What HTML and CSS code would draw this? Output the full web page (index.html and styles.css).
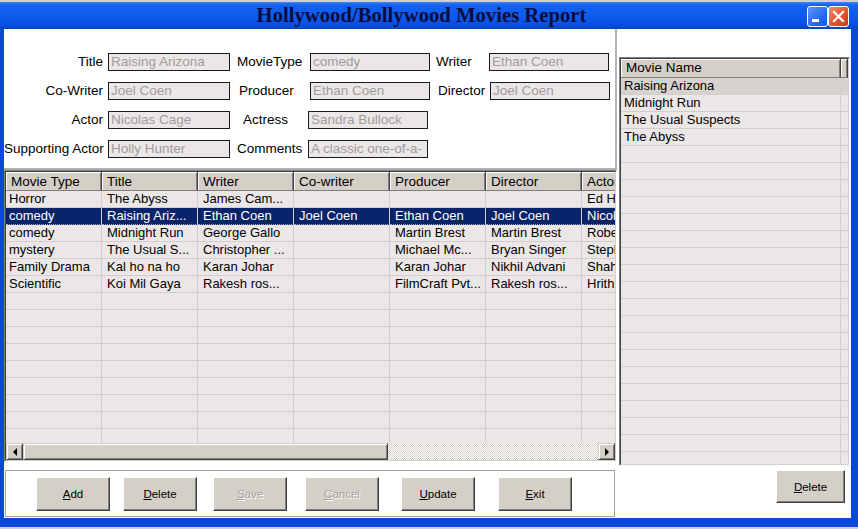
FILE: index.html
```html
<!DOCTYPE html>
<html>
<head>
<meta charset="utf-8">
<link rel="stylesheet" href="styles.css">
</head>
<body>
<div class="screen">
  <div class="window">
    <div class="titlebar">
      <div class="title">Hollywood/Bollywood Movies Report</div>
      <div class="tb-btns">
        <span class="tb-btn tb-min"><svg width="19" height="19" viewBox="0 0 19 19"><rect x="4" y="12" width="7" height="3" fill="#fff"/></svg></span>
        <span class="tb-btn tb-close"><svg width="19" height="19" viewBox="0 0 19 19"><path d="M5 5 L14 14 M14 5 L5 14" stroke="#fff" stroke-width="2.2" stroke-linecap="square"/></svg></span>
      </div>
    </div>
    <div class="frame">
      <div class="client">
        <div class="leftcol">
          <div class="form">
            <div class="frow">
              <span class="lab l1">Title</span><span class="inp">Raising Arizona</span>
              <span class="lab l2">MovieType</span><span class="inp">comedy</span>
              <span class="lab l3">Writer</span><span class="inp">Ethan Coen</span>
            </div>
            <div class="frow">
              <span class="lab l1">Co-Writer</span><span class="inp">Joel Coen</span>
              <span class="lab l2 l2b">Producer</span><span class="inp">Ethan Coen</span>
              <span class="lab l3 l3b">Director</span><span class="inp">Joel Coen</span>
            </div>
            <div class="frow">
              <span class="lab l1">Actor</span><span class="inp">Nicolas Cage</span>
              <span class="lab l2 l2c">Actress</span><span class="inp inp-s">Sandra Bullock</span>
            </div>
            <div class="frow">
              <span class="lab l1">Supporting Actor</span><span class="inp">Holly Hunter</span>
              <span class="lab l2 l2d">Comments</span><span class="inp inp-s">A classic one-of-a-</span>
            </div>
          </div>

          <div class="dgrid">
            <div class="dg-inner">
              <div class="dg-head">
                <span class="hc">Movie Type</span><span class="hc">Title</span><span class="hc">Writer</span><span class="hc">Co-writer</span><span class="hc">Producer</span><span class="hc">Director</span><span class="hc">Actor</span>
              </div>
              <div class="dg-body">
                <div class="dr"><span class="dc">Horror</span><span class="dc">The Abyss</span><span class="dc">James Cam...</span><span class="dc"></span><span class="dc"></span><span class="dc"></span><span class="dc">Ed Harris</span></div>
                <div class="dr sel"><span class="dc">comedy</span><span class="dc">Raising Ariz...</span><span class="dc">Ethan Coen</span><span class="dc">Joel Coen</span><span class="dc">Ethan Coen</span><span class="dc">Joel Coen</span><span class="dc">Nicolas Cage</span></div>
                <div class="dr"><span class="dc">comedy</span><span class="dc">Midnight Run</span><span class="dc">George Gallo</span><span class="dc"></span><span class="dc">Martin Brest</span><span class="dc">Martin Brest</span><span class="dc">Robert De Niro</span></div>
                <div class="dr"><span class="dc">mystery</span><span class="dc">The Usual S...</span><span class="dc">Christopher ...</span><span class="dc"></span><span class="dc">Michael Mc...</span><span class="dc">Bryan Singer</span><span class="dc">Stephen Baldwin</span></div>
                <div class="dr"><span class="dc">Family Drama</span><span class="dc">Kal ho na ho</span><span class="dc">Karan Johar</span><span class="dc"></span><span class="dc">Karan Johar</span><span class="dc">Nikhil Advani</span><span class="dc">Shah Rukh Khan</span></div>
                <div class="dr"><span class="dc">Scientific</span><span class="dc">Koi Mil Gaya</span><span class="dc">Rakesh ros...</span><span class="dc"></span><span class="dc">FilmCraft Pvt...</span><span class="dc">Rakesh ros...</span><span class="dc">Hrithik Roshan</span></div>
                <div class="dr"><span class="dc"></span><span class="dc"></span><span class="dc"></span><span class="dc"></span><span class="dc"></span><span class="dc"></span><span class="dc"></span></div>
                <div class="dr"><span class="dc"></span><span class="dc"></span><span class="dc"></span><span class="dc"></span><span class="dc"></span><span class="dc"></span><span class="dc"></span></div>
                <div class="dr"><span class="dc"></span><span class="dc"></span><span class="dc"></span><span class="dc"></span><span class="dc"></span><span class="dc"></span><span class="dc"></span></div>
                <div class="dr"><span class="dc"></span><span class="dc"></span><span class="dc"></span><span class="dc"></span><span class="dc"></span><span class="dc"></span><span class="dc"></span></div>
                <div class="dr"><span class="dc"></span><span class="dc"></span><span class="dc"></span><span class="dc"></span><span class="dc"></span><span class="dc"></span><span class="dc"></span></div>
                <div class="dr"><span class="dc"></span><span class="dc"></span><span class="dc"></span><span class="dc"></span><span class="dc"></span><span class="dc"></span><span class="dc"></span></div>
                <div class="dr"><span class="dc"></span><span class="dc"></span><span class="dc"></span><span class="dc"></span><span class="dc"></span><span class="dc"></span><span class="dc"></span></div>
                <div class="dr"><span class="dc"></span><span class="dc"></span><span class="dc"></span><span class="dc"></span><span class="dc"></span><span class="dc"></span><span class="dc"></span></div>
                <div class="dr"><span class="dc"></span><span class="dc"></span><span class="dc"></span><span class="dc"></span><span class="dc"></span><span class="dc"></span><span class="dc"></span></div>
                <div class="dr"><span class="dc"></span><span class="dc"></span><span class="dc"></span><span class="dc"></span><span class="dc"></span><span class="dc"></span><span class="dc"></span></div>
              </div>
              <div class="hscroll">
                <span class="sb-btn"><span class="tri tri-l"></span></span>
                <span class="sb-thumb"></span>
                <span class="sb-track"></span>
                <span class="sb-btn"><span class="tri tri-r"></span></span>
              </div>
            </div>
          </div>

          <div class="btnbar">
            <button class="btn b-add"><u>A</u>dd</button>
            <button class="btn b-del"><u>D</u>elete</button>
            <button class="btn b-save dis"><u>S</u>ave</button>
            <button class="btn b-cancel dis"><u>C</u>ancel</button>
            <button class="btn b-upd"><u>U</u>pdate</button>
            <button class="btn b-exit"><u>E</u>xit</button>
          </div>
        </div>

        <div class="rightcol">
          <div class="list">
            <div class="ls-inner">
              <div class="ls-head"><span class="lh">Movie Name</span><span class="lh lh-stub"></span></div>
              <div class="ls-body">
                <div class="lr cur"><span class="lc">Raising Arizona</span><span class="lc"></span></div>
                <div class="lr"><span class="lc">Midnight Run</span><span class="lc"></span></div>
                <div class="lr"><span class="lc">The Usual Suspects</span><span class="lc"></span></div>
                <div class="lr"><span class="lc">The Abyss</span><span class="lc"></span></div>
                <div class="lr"><span class="lc"></span><span class="lc"></span></div>
                <div class="lr"><span class="lc"></span><span class="lc"></span></div>
                <div class="lr"><span class="lc"></span><span class="lc"></span></div>
                <div class="lr"><span class="lc"></span><span class="lc"></span></div>
                <div class="lr"><span class="lc"></span><span class="lc"></span></div>
                <div class="lr"><span class="lc"></span><span class="lc"></span></div>
                <div class="lr"><span class="lc"></span><span class="lc"></span></div>
                <div class="lr"><span class="lc"></span><span class="lc"></span></div>
                <div class="lr"><span class="lc"></span><span class="lc"></span></div>
                <div class="lr"><span class="lc"></span><span class="lc"></span></div>
                <div class="lr"><span class="lc"></span><span class="lc"></span></div>
                <div class="lr"><span class="lc"></span><span class="lc"></span></div>
                <div class="lr"><span class="lc"></span><span class="lc"></span></div>
                <div class="lr"><span class="lc"></span><span class="lc"></span></div>
                <div class="lr"><span class="lc"></span><span class="lc"></span></div>
                <div class="lr"><span class="lc"></span><span class="lc"></span></div>
                <div class="lr"><span class="lc"></span><span class="lc"></span></div>
                <div class="lr"><span class="lc"></span><span class="lc"></span></div>
                <div class="lr"><span class="lc"></span><span class="lc"></span></div>
                <div class="lr"><span class="lc"></span><span class="lc"></span></div>
              </div>
            </div>
          </div>
          <div class="rbtn-row">
            <button class="btn b-rdel"><u>D</u>elete</button>
          </div>
        </div>
      </div>
    </div>
  </div>
</div>
</body>
</html>
```

FILE: styles.css
```css
* { box-sizing: border-box; }
html, body { margin: 0; padding: 0; }
body {
  width: 858px;
  height: 529px;
  overflow: hidden;
  font-family: "Liberation Sans", Arial, sans-serif;
  font-size: 13px;
  color: #000;
}
.screen {
  width: 858px;
  height: 529px;
  background: #cfcfcf;
  display: flex;
  flex-direction: column;
}
.window {
  margin-top: 2px;
  height: 525px;
  background: #0a48d8;
  display: flex;
  flex-direction: column;
}
.titlebar {
  height: 27px;
  display: flex;
  align-items: center;
  background: linear-gradient(#3d84f7 0, #1462f2 3px, #0d5aee 55%, #0a4fde 85%, #0843c6 100%);
}
.title {
  flex: 1;
  text-align: center;
  padding-left: 36px;
  font-family: "Liberation Serif", "Times New Roman", serif;
  font-weight: bold;
  font-size: 20.7px;
  color: #0c0c3e;
  white-space: nowrap;
}
.tb-btns {
  display: flex;
  padding-right: 9px;
  padding-top: 2px;
}
.tb-btn {
  width: 21px;
  height: 21px;
  border: 1px solid #fff;
  border-radius: 3px;
  display: flex;
  align-items: center;
  justify-content: center;
}
.tb-min {
  background: linear-gradient(135deg, #5b95fa, #2a6af0 60%, #1c57e0);
}
.tb-close {
  background: linear-gradient(135deg, #f08f6c, #e2552d 55%, #c63d1a);
}
.frame {
  flex: 1;
  display: flex;
  padding: 0 7px 9px 4px;
}
.client {
  flex: 1;
  background: #fff;
  display: flex;
  align-items: flex-start;
}
.leftcol {
  width: 613px;
  display: flex;
  flex-direction: column;
}
.form {
  height: 141px;
  padding-top: 24px;
  border-right: 2px solid #b4b4b4;
  border-bottom: 2px solid #b0b0b0;
  display: flex;
  flex-direction: column;
  gap: 11px;
}
.frow {
  display: flex;
  height: 18px;
  align-items: center;
}
.lab {
  font-size: 13.5px;
  line-height: 18px;
  white-space: nowrap;
}
.l1 { width: 104px; text-align: right; padding-right: 5px; }
.l2 { width: 80px; padding-left: 7px; }
.l2b { padding-left: 9px; }
.l2c { padding-left: 13px; width: 78px; }
.l2d { width: 78px; }
.l3 { width: 59px; padding-left: 6px; }
.l3b { padding-left: 8px; width: 60px; }
.inp {
  width: 122px;
  height: 18px;
  border: 1px solid #1a1a1a;
  background: #ebe7e7;
  color: #a09c9c;
  font-size: 13.5px;
  line-height: 16px;
  padding-left: 2px;
  white-space: nowrap;
  overflow: hidden;
}
.frow .inp:nth-child(4), .frow .inp:nth-child(6) { width: 120px; }

/* data grid */
.dgrid {
  height: 292px;
  border: 1px solid;
  border-color: #808080 #fff #fff #808080;
}
.dg-inner {
  height: 100%;
  border: 1px solid;
  border-color: #404040 #d4d0c8 #d4d0c8 #404040;
  background: #ebe7e7;
  display: flex;
  flex-direction: column;
  overflow: hidden;
}
.dg-head, .dr {
  display: grid;
  grid-template-columns: repeat(7, 96px);
  width: 672px;
}
.dg-head { height: 19px; flex: none; }
.hc {
  background: #d4d0c8;
  border-right: 1px solid #404040;
  border-bottom: 1px solid #808080;
  box-shadow: inset 1px 1px #fff, inset -1px 0 #808080;
  font-size: 13.5px;
  line-height: 19px;
  padding-left: 5px;
  white-space: nowrap;
  overflow: hidden;
}
.dg-body {
  flex: 1;
  overflow: hidden;
}
.dr { height: 17px; }
.dc {
  border-right: 1px solid #d2cecd;
  border-bottom: 1px solid #d2cecd;
  line-height: 16px;
  padding-left: 5px;
  white-space: nowrap;
  overflow: hidden;
}
.dc:first-child { padding-left: 3px; }
.sel .dc {
  background: #0a246a;
  color: #fff;
  border-bottom: 1px dotted #9aa6c8;
}
.hscroll {
  height: 17px;
  flex: none;
  display: flex;
}
.sb-btn {
  width: 17px;
  height: 17px;
  background: #d4d0c8;
  border: 1px solid;
  border-color: #d4d0c8 #404040 #404040 #d4d0c8;
  box-shadow: inset 1px 1px #fff, inset -1px -1px #808080;
  display: flex;
  align-items: center;
  justify-content: center;
}
.tri { width: 0; height: 0; border-top: 4px solid transparent; border-bottom: 4px solid transparent; }
.tri-l { border-right: 4px solid #000; }
.tri-r { border-left: 4px solid #000; }
.sb-thumb {
  width: 365px;
  height: 17px;
  background: #d4d0c8;
  border: 1px solid;
  border-color: #d4d0c8 #404040 #404040 #d4d0c8;
  box-shadow: inset 1px 1px #fff, inset -1px -1px #808080;
}
.sb-track {
  flex: 1;
  background-color: #fff;
  background-image: repeating-conic-gradient(#d4d0c8 0 25%, #fff 0 50%);
  background-size: 2px 2px;
}

/* buttons */
.btnbar {
  margin: 8px 2px 0 1px;
  height: 47px;
  border: 1px solid #a0a0a0;
  display: flex;
  align-items: flex-start;
  padding-top: 6px;
}
.btn {
  width: 74px;
  height: 34px;
  padding: 0;
  background: #d4d0c8;
  border: 1px solid;
  border-color: #fff #404040 #404040 #fff;
  box-shadow: inset -1px -1px #808080;
  font-family: "Liberation Sans", Arial, sans-serif;
  font-size: 11.5px;
  color: #000;
}
.btn.dis {
  color: #a4a09c;
  text-shadow: 1px 1px #fff;
}
.b-add { margin-left: 30px; }
.b-del { margin-left: 13px; }
.b-save { margin-left: 16px; }
.b-cancel { margin-left: 18px; }
.b-upd { margin-left: 22px; }
.b-exit { margin-left: 23px; }

/* right list */
.rightcol {
  width: 231px;
  margin-left: 2px;
  display: flex;
  flex-direction: column;
}
.list {
  margin-top: 28px;
  height: 409px;
  border: 1px solid;
  border-color: #808080 #fff #fff #808080;
}
.ls-inner {
  height: 100%;
  border: 1px solid;
  border-color: #404040 #d4d0c8 #d4d0c8 #404040;
  background: #ebe7e7;
  display: flex;
  flex-direction: column;
  overflow: hidden;
}
.ls-head, .lr {
  display: grid;
  grid-template-columns: 220px 1fr;
}
.ls-head { height: 19px; flex: none; }
.lh {
  background: #d4d0c8;
  border-right: 1px solid #404040;
  border-bottom: 1px solid #808080;
  box-shadow: inset 1px 1px #fff, inset -1px 0 #808080;
  font-size: 13.5px;
  line-height: 18px;
  padding-left: 5px;
  white-space: nowrap;
}
.ls-body { flex: 1; overflow: hidden; }
.lr { height: 17px; }
.lc {
  border-bottom: 1px solid #d2cecd;
  line-height: 16px;
  padding-left: 3px;
  white-space: nowrap;
  font-size: 13px;
}
.lc:first-child { border-right: 1px solid #d2cecd; }
.cur .lc { background: #d6d2ce; }
.rbtn-row {
  display: flex;
  justify-content: flex-end;
  margin-top: 4px;
  padding-right: 5px;
}
.b-rdel { width: 69px; height: 33px; }
```
